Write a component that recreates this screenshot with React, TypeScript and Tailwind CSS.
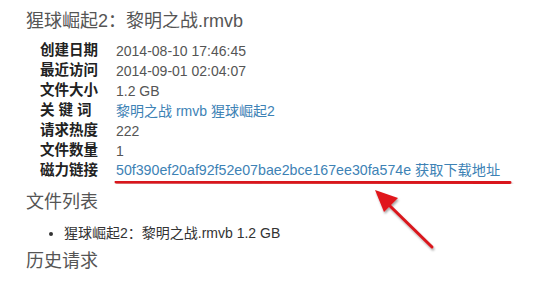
import React from "react";

const rows: { label: string; value: React.ReactNode }[] = [
  { label: "创建日期", value: "2014-08-10 17:46:45" },
  { label: "最近访问", value: "2014-09-01 02:04:07" },
  { label: "文件大小", value: "1.2 GB" },
  {
    label: "关 键 词",
    value: (
      <span className="text-[#3d82b5]">
        <a href="#">黎明之战</a> <a href="#">rmvb</a> <a href="#">猩球崛起2</a>
      </span>
    ),
  },
  { label: "请求热度", value: "222" },
  { label: "文件数量", value: "1" },
  {
    label: "磁力链接",
    value: (
      <a href="#" className="text-[14.2px] text-[#3d82b5]">
        50f390ef20af92f52e07bae2bce167ee30fa574e 获取下载地址
      </a>
    ),
  },
];

export default function App() {
  return (
    <div
      className="relative w-[546px] h-[283px] bg-white overflow-hidden pl-[26px] pt-[9px]"
      style={{ fontFamily: '"Liberation Sans", Arial, "Noto Sans CJK SC", sans-serif' }}
    >
      {/* Title */}
      <h1 className="text-[18px] leading-[24px] text-[#555]">猩球崛起2：黎明之战.rmvb</h1>

      {/* Info rows */}
      <div className="mt-[8px] pl-[14px] flex flex-col">
        {rows.map((r) => (
          <div key={r.label} className="flex items-center h-[20px] text-[14px]">
            <span className="w-[76px] text-[14.5px] font-bold text-[#222] whitespace-pre">{r.label}</span>
            <span className="text-[#555]">{r.value}</span>
          </div>
        ))}
      </div>

      {/* File list */}
      <h2 className="mt-[9px] text-[18px] leading-[24px] text-[#555]">文件列表</h2>
      <ul className="mt-[9px] pl-[38px] list-disc text-[14px] text-[#333] leading-[20px]">
        <li>猩球崛起2：黎明之战.rmvb 1.2 GB</li>
      </ul>

      <h2 className="mt-[6px] text-[18px] leading-[24px] text-[#555]">历史请求</h2>

      {/* Annotation overlay */}
      <svg className="absolute left-0 top-0 pointer-events-none" width="546" height="283">
        <defs>
          <filter id="sh" x="-10%" y="-50%" width="120%" height="300%">
            <feDropShadow dx="1" dy="2" stdDeviation="1.2" floodColor="#000" floodOpacity="0.35" />
          </filter>
        </defs>
        <line x1="116" y1="182" x2="510" y2="182.5" stroke="#d9161c" strokeWidth="3" strokeLinecap="round" filter="url(#sh)" />
        <g filter="url(#sh)">
          <line x1="432" y1="247" x2="390" y2="206" stroke="#d9161c" strokeWidth="3" strokeLinecap="round" />
          <polygon points="375,190 398,198 384,212" fill="#e0151b" />
        </g>
      </svg>
    </div>
  );
}
